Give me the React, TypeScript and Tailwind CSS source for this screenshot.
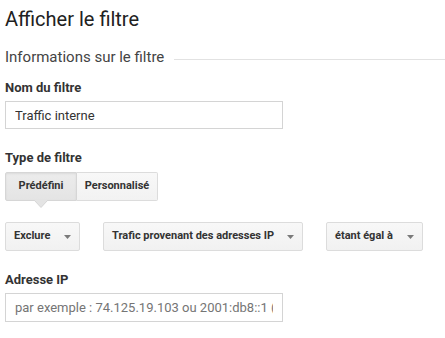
import React from "react";

function Caret() {
  return (
    <svg width="7" height="4" viewBox="0 0 7 4" className="shrink-0">
      <path d="M0 0 L7 0 L3.5 4 Z" fill="#7a7a7a" />
    </svg>
  );
}

function Dropdown({ label, width }: { label: string; width: string }) {
  return (
    <button
      className={`flex h-[29px] items-center justify-between gap-[10px] whitespace-nowrap rounded-[2px] border border-[#dcdcdc] bg-gradient-to-b from-[#f8f8f8] to-[#f1f1f1] px-[8px] text-[11px] font-bold text-[#333] ${width}`}
    >
      <span>{label}</span>
      <Caret />
    </button>
  );
}

export default function App() {
  return (
    <div
      className="h-[338px] w-[445px] overflow-hidden bg-white pl-[5px] text-[#333]"
      style={{ fontFamily: "Roboto, 'Liberation Sans', Arial, sans-serif" }}
    >
      <h1 className="pt-[7px] text-[20px] leading-[24px] text-[#212121]">Afficher le filtre</h1>

      <div className="mt-[16px] flex items-start">
        <h2 className="text-[15px] leading-[20px] text-[#444]">Informations sur le filtre</h2>
        <div className="ml-[10px] mt-[12px] h-px flex-1 bg-[#e2e2e2]" />
      </div>

      <div className="mt-[13px] text-[13px] font-bold leading-[16px] text-[#333]">Nom du filtre</div>
      <input
        className="mt-[5px] h-[28px] w-[278px] border border-[#d4d4d4] px-[9px] text-[13px] text-[#333] outline-none"
        defaultValue="Traffic interne"
      />

      <div className="mt-[21px] text-[13px] font-bold leading-[16px] text-[#333]">Type de filtre</div>
      <div className="relative mt-[6px] flex w-[153px]">
        <button className="h-[29px] w-[72px] whitespace-nowrap rounded-l-[2px] border border-[#d6d6d6] bg-gradient-to-b from-[#ececec] to-[#e4e4e4] text-[11px] font-bold text-[#333] shadow-[inset_0_1px_2px_rgba(0,0,0,0.08)]">
          Prédéfini
        </button>
        <button className="h-[29px] w-[81px] whitespace-nowrap rounded-r-[2px] border border-l-0 border-[#dcdcdc] bg-gradient-to-b from-[#f8f8f8] to-[#f2f2f2] text-[11px] font-bold text-[#333]">
          Personnalisé
        </button>
        <svg
          width="14"
          height="8"
          viewBox="0 0 14 8"
          className="absolute left-[29px] top-[28px]"
        >
          <path d="M0.5 0.5 L7 7.5 L13.5 0.5" fill="#e4e4e4" stroke="#d6d6d6" />
          <rect x="1" y="0" width="12" height="1" fill="#e4e4e4" />
        </svg>
      </div>

      <div className="mt-[21px] flex gap-[23px]">
        <Dropdown label="Exclure" width="w-[75px]" />
        <Dropdown label="Trafic provenant des adresses IP" width="w-[200px]" />
        <Dropdown label="étant égal à" width="w-[97px]" />
      </div>

      <div className="mt-[21px] text-[13px] font-bold leading-[16px] text-[#333]">Adresse IP</div>
      <input
        className="mt-[5px] h-[29px] w-[278px] border border-[#d4d4d4] px-[9px] text-[13px] text-[#333] outline-none placeholder:text-[#757575]"
        placeholder="par exemple : 74.125.19.103 ou 2001:db8::1 (IPv6)"
      />
    </div>
  );
}
